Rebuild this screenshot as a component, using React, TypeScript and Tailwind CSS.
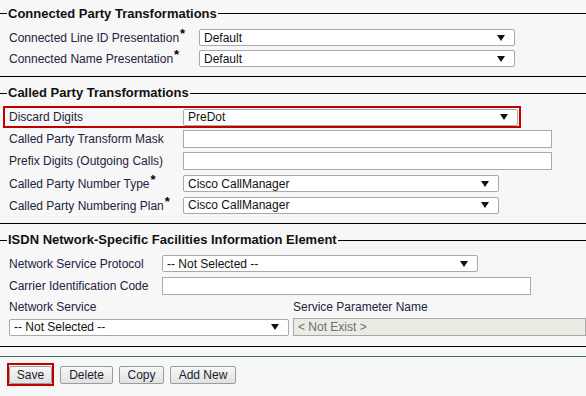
import React from 'react';

function Arrow() {
  return (
    <svg width="8" height="8" viewBox="0 0 8 8" className="shrink-0">
      <polygon points="0,1 8,1 4,7" fill="#111" />
    </svg>
  );
}

function Select({ value, className }: { value: string; className: string }) {
  return (
    <div className={`flex h-[17px] items-center justify-between rounded-[2px] border border-[#a9a9a9] bg-white pl-[4px] pr-[9px] text-[12px] leading-none text-[#111] ${className}`}>
      <span>{value}</span>
      <Arrow />
    </div>
  );
}

function TextBox({ className }: { className: string }) {
  return <div className={`h-[18px] border border-[#a9a9a9] bg-white ${className}`} />;
}

function Legend({ title }: { title: string }) {
  return (
    <div className="mt-[3px] flex h-[26px] items-center">
      <div className="h-px w-[7px] bg-black" />
      <span className="px-px text-[13px] font-bold text-[#111]">{title}</span>
      <div className="h-px flex-1 bg-black" />
    </div>
  );
}

function Label({ text, req, w }: { text: string; req?: boolean; w: string }) {
  return (
    <div className={`shrink-0 text-[12px] leading-none text-[#24223d] ${w}`}>
      {text}
      {req && <span className="relative -top-[4px] ml-px text-[13px] font-bold text-black">*</span>}
    </div>
  );
}

function Button({ text, w }: { text: string; w: string }) {
  return (
    <div className={`flex h-[18px] items-center justify-center rounded-[2px] border border-[#9c9c9c] bg-gradient-to-b from-[#f7f7f7] to-[#e1e1e1] text-[12px] text-[#1c1c2e] ${w}`}>
      {text}
    </div>
  );
}

export default function App() {
  return (
    <div className="h-[396px] w-[586px] overflow-hidden bg-[#f7f7f7] font-['Liberation_Sans',Arial,sans-serif]">
      {/* Connected Party */}
      <div className="border-b border-black pb-[7px]">
        <div className="flex h-[27px] items-center">
          <div className="h-px w-[7px] bg-black" />
          <span className="px-px text-[13px] font-bold text-[#111]">Connected Party Transformations</span>
          <div className="h-px flex-1 bg-black" />
        </div>
        <div className="flex h-[21px] items-center pl-[9px]">
          <Label text="Connected Line ID Presentation" req w="w-[190px]" />
          <Select value="Default" className="w-[316px]" />
        </div>
        <div className="flex h-[21px] items-center pl-[9px]">
          <Label text="Connected Name Presentation" req w="w-[190px]" />
          <Select value="Default" className="w-[316px]" />
        </div>
      </div>

      {/* Called Party */}
      <div className="border-b border-black pb-[8px]">
        <Legend title="Called Party Transformations" />
        <div className="ml-[3px] flex h-[22px] w-[518px] items-center border-2 border-[#c00000] pl-[4px]">
          <Label text="Discard Digits" w="w-[174px]" />
          <Select value="PreDot" className="w-[335px]" />
        </div>
        <div className="flex h-[22px] items-center pl-[9px]">
          <Label text="Called Party Transform Mask" w="w-[174px]" />
          <TextBox className="w-[369px]" />
        </div>
        <div className="flex h-[22px] items-center pl-[9px]">
          <Label text="Prefix Digits (Outgoing Calls)" w="w-[174px]" />
          <TextBox className="w-[369px]" />
        </div>
        <div className="flex h-[23px] items-center pl-[9px]">
          <Label text="Called Party Number Type" req w="w-[174px]" />
          <Select value="Cisco CallManager" className="w-[316px]" />
        </div>
        <div className="flex h-[20px] items-center pl-[9px]">
          <Label text="Called Party Numbering Plan" req w="w-[174px]" />
          <Select value="Cisco CallManager" className="w-[316px]" />
        </div>
      </div>

      {/* ISDN */}
      <div className="border-b border-black pb-[9px]">
        <Legend title="ISDN Network-Specific Facilities Information Element" />
        <div className="flex h-[21px] items-center pl-[9px]">
          <Label text="Network Service Protocol" w="w-[153px]" />
          <Select value="-- Not Selected --" className="w-[316px]" />
        </div>
        <div className="flex h-[23px] items-center pl-[9px]">
          <Label text="Carrier Identification Code" w="w-[153px]" />
          <TextBox className="w-[369px]" />
        </div>
        <div className="flex h-[20px] items-center pl-[9px]">
          <Label text="Network Service" w="w-[284px]" />
          <Label text="Service Parameter Name" w="w-[200px]" />
        </div>
        <div className="flex h-[20px] items-center gap-[4px] pl-[9px]">
          <Select value="-- Not Selected --" className="w-[280px] shrink-0" />
          <div className="flex h-[18px] flex-1 items-center border border-[#a9a9a9] bg-[#ebebe4] pl-[4px] text-[12px] text-[#6d6d6d]">
            &lt; Not Exist &gt;
          </div>
        </div>
      </div>

      {/* Buttons */}
      <div className="mt-[9px] border-t border-[#3b6b6d] pt-[6px]">
        <div className="flex items-center gap-[6px] pl-[7px]">
          <div className="flex h-[23px] w-[47px] items-center justify-center border-2 border-[#c00000]">
            <Button text="Save" w="w-[43px]" />
          </div>
          <Button text="Delete" w="w-[53px]" />
          <Button text="Copy" w="w-[45px]" />
          <Button text="Add New" w="w-[66px]" />
        </div>
      </div>
    </div>
  );
}
